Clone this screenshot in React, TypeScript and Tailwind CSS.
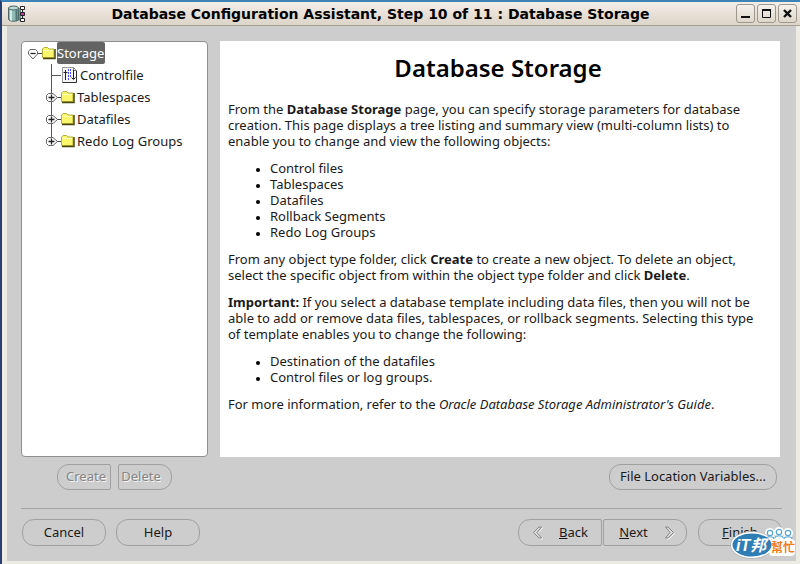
import { useState } from "react";
import type { ReactNode } from "react";
import clsx from "clsx";

type TreeItem = {
  id: string;
  label: string;
  kind: "root" | "file" | "folder";
  last?: boolean;
};

const treeItems: TreeItem[] = [
  { id: "storage", label: "Storage", kind: "root" },
  { id: "controlfile", label: "Controlfile", kind: "file" },
  { id: "tablespaces", label: "Tablespaces", kind: "folder" },
  { id: "datafiles", label: "Datafiles", kind: "folder" },
  { id: "redo", label: "Redo Log Groups", kind: "folder", last: true },
];

const objectTypes = [
  "Control files",
  "Tablespaces",
  "Datafiles",
  "Rollback Segments",
  "Redo Log Groups",
];

const templateChanges = [
  "Destination of the datafiles",
  "Control files or log groups.",
];

function Folder({ x }: { x: number }) {
  return (
    <g transform={`translate(${x} 5)`}>
      <path d="M.5 10.500V2L2 .5H5.500L7 2H12V10.500Z" fill="#faf76c" stroke="#b5ae3a" />
      <path d="M1 3.500H11" stroke="#ffffc0" />
      <path d="M1 11.500H13V2" fill="none" stroke="#4a4610" strokeWidth="1.500" />
    </g>
  );
}

function TreeGraphic({ item }: { item: TreeItem }) {
  if (item.kind === "root") {
    return (
      <svg width="30" height="22" className="shrink-0" aria-hidden="true">
        <path d="M10 11.500H15" stroke="#444" />
        <path
          d="M3 7.500H8.500L10.500 9.500V12L6 17L1.500 12V9.500Z"
          fill="#fff"
          stroke="#666"
        />
        <path d="M3.500 11.500H8.500" stroke="#222" strokeWidth="1.300" />
        <Folder x={15} />
      </svg>
    );
  }

  if (item.kind === "file") {
    return (
      <svg width="53" height="22" className="shrink-0" aria-hidden="true">
        <path d="M24.500 0V22M24.500 11.500H34" stroke="#555" fill="none" />
        <path d="M35.500 3.500H46.500L49.500 6.500V18.500H35.500Z" fill="#f4f4f4" stroke="#999" />
        <path d="M35.500 18.500H49.500V7" fill="none" stroke="#333" />
        <path d="M46.500 3.500V6.500H49.500" fill="none" stroke="#777" />
        <path d="M38.500 6V16M36.500 8.500H40.500M46.500 6V15" stroke="#222" fill="none" />
        <path d="M44.500 13.500L46.500 15.500L48.500 13.500" stroke="#222" fill="none" />
        <path d="M41.500 5V17M43.500 5V14" stroke="#4a4ae0" strokeDasharray="2 1" />
      </svg>
    );
  }

  return (
    <svg width="50" height="22" className="shrink-0" aria-hidden="true">
      <path d={item.last ? "M24.500 0V8" : "M24.500 0V22"} stroke="#555" />
      <path d="M29 11.500H34" stroke="#444" />
      <path
        d="M21.500 7.500H26L30.500 11.500L26 15.500H21.500L19.500 13.500V9.500Z"
        fill="#fff"
        stroke="#666"
      />
      <path d="M21.500 11.500H27.500M24.500 8.500V14.500" stroke="#222" strokeWidth="1.300" />
      <Folder x={34} />
    </svg>
  );
}

function DatabaseIcon() {
  return (
    <svg width="20" height="20" viewBox="0 0 20 20" aria-hidden="true">
      <path d="M4 4V15C4 18 14 18 14 15V4Z" fill="#6f9a96" />
      <path d="M1.500 4V15C1.500 18 11.500 18 11.500 15V4Z" fill="#8fbab5" stroke="#4b6664" />
      <path d="M4 6V16.500" stroke="#d5ebe8" strokeWidth="2" />
      <path d="M9.500 6V16.500" stroke="#4f7673" strokeWidth="2" />
      <ellipse cx="6.500" cy="4" rx="5" ry="2" fill="#b9d6d2" stroke="#4b6664" />
      <path d="M15.500 4V16" stroke="#222" />
      <path d="M13.500 2.500H17.500V5.500H13.500Z" fill="#fff" stroke="#222" />
      <path d="M13.500 8.500H17.500V11.500H13.500Z" fill="#c438a8" stroke="#222" />
      <path d="M13.500 14.500H17.500V17.500H13.500Z" fill="#fff" stroke="#222" />
    </svg>
  );
}

function WindowButton({ label, children }: { label: string; children: ReactNode }) {
  return (
    <button
      type="button"
      aria-label={label}
      className="flex h-[19px] w-[19px] items-center justify-center rounded-[3px] border border-[#9d978b] bg-linear-to-b from-[#f5f2ec] to-[#ded7cb]"
    >
      <svg width="11" height="11" viewBox="0 0 11 11" fill="none" stroke="#111" aria-hidden="true">
        {children}
      </svg>
    </button>
  );
}

type PushButtonProps = {
  children: ReactNode;
  className?: string;
  disabled?: boolean;
};

function PushButton({ children, className, disabled }: PushButtonProps) {
  return (
    <button
      type="button"
      disabled={disabled}
      className={clsx(
        "flex items-center justify-center border border-[#a0a0a0] pb-[2px] text-[13px] leading-4",
        disabled ? "text-[#858585] [text-shadow:1px_1px_0_#f4f4f4]" : "text-[#1a1a1a]",
        className
      )}
    >
      {children}
    </button>
  );
}

function Chevron({ next }: { next?: boolean }) {
  const d = next
    ? "M1.500 1H4L9.500 6.500L4 12H1.500L6 6.500Z"
    : "M9.500 1H7L1.500 6.500L7 12H9.500L5 6.500Z";
  return (
    <svg width="11" height="14" viewBox="0 0 11 14" className="mt-[2px]" aria-hidden="true">
      <path d={d} fill="none" stroke="#f2f2f2" transform="translate(1 1)" />
      <path d={d} fill="#dcdcdc" stroke="#858585" />
    </svg>
  );
}

function BulletList({ items }: { items: string[] }) {
  return (
    <ul className="my-[11px] pl-7">
      {items.map((item) => (
        <li key={item} className="flex items-center">
          <span className="mt-1 mr-[10px] h-1 w-1 rounded-full bg-black" />
          {item}
        </li>
      ))}
    </ul>
  );
}

function SiteBadge() {
  return (
    <svg
      width="68"
      height="34"
      viewBox="0 0 68 34"
      className="pointer-events-none absolute right-[2px] bottom-[4px]"
      role="img"
      aria-label="iT邦幫忙"
    >
      <g fill="#fff" stroke="#fff" strokeWidth="4">
        <circle cx="40" cy="7" r="3" />
        <circle cx="49" cy="6" r="3" />
        <circle cx="58" cy="7" r="3" />
        <path d="M36 12H62" />
      </g>
      <ellipse cx="22" cy="19" rx="21.500" ry="13.500" fill="#fff" stroke="#9a9a9a" strokeWidth=".6" />
      <rect x="39" y="13" width="26" height="17" rx="4" fill="#fff" />
      <g fill="#fff" stroke="#5aa6d0" strokeWidth="1.200">
        <path d="M36 13C36 10 44 10 44 13M45 12C45 9 53 9 53 12M54 13C54 10 62 10 62 13" />
        <circle cx="40" cy="7" r="2.700" />
        <circle cx="49" cy="6" r="2.700" />
        <circle cx="58" cy="7" r="2.700" />
      </g>
      <ellipse cx="22" cy="19" rx="19.500" ry="11.500" fill="#2f7db5" />
      <text
        x="6"
        y="25"
        fill="#fff"
        fontSize="16"
        fontWeight="700"
        fontStyle="italic"
        fontFamily="'Liberation Sans', 'Noto Sans CJK TC', sans-serif"
      >
        iT邦
      </text>
      <text
        x="41"
        y="26"
        fill="#f07c1c"
        fontSize="12"
        fontWeight="700"
        fontFamily="'Noto Sans CJK TC', sans-serif"
      >
        幫忙
      </text>
    </svg>
  );
}

export default function App() {
  const [selected, setSelected] = useState("storage");

  return (
    <div className="relative flex min-h-screen flex-col border-t-2 border-l-2 border-t-[#3d83b5] border-l-[#27406f] bg-[#ecebe4] font-['Noto_Sans',sans-serif] text-[13px] leading-4 text-[#1a1a1a]">
      {/* Title bar */}
      <header className="flex h-6 items-center border-b border-b-[#a69f93] bg-linear-to-b from-[#f3f0e9] via-[#e9e0d8] to-[#dcd5c9] pr-[3px] pl-[5px]">
        <DatabaseIcon />
        <div className="flex-1 pr-[2px] text-center font-['DejaVu_Sans',sans-serif] text-sm font-bold text-black">
          Database Configuration Assistant, Step 10 of 11 : Database Storage
        </div>
        <div className="flex gap-[2px]">
          <WindowButton label="Minimize">
            <path d="M1 9H10" strokeWidth="2" />
          </WindowButton>
          <WindowButton label="Maximize">
            <path d="M1.500 2H9.500V9.500H1.500Z" />
            <path d="M1 2H10" strokeWidth="2" />
          </WindowButton>
          <WindowButton label="Close">
            <path d="M2 2L9 9M9 2L2 9" strokeWidth="2.400" />
          </WindowButton>
        </div>
      </header>

      <main className="mr-1 mb-[3px] ml-[5px] flex flex-1 flex-col bg-[#cdcdcd] px-[14px] pt-[15px] pb-[15px]">
        <div className="flex flex-1 gap-3 pr-[2px]">
          {/* Storage tree */}
          <nav className="w-[187px] shrink-0 rounded-[4px] border border-[#8f8f8f] bg-white pl-[5px]">
            <ul>
              {treeItems.map((item) => (
                <li key={item.id} className="flex h-[22px] items-center">
                  <TreeGraphic item={item} />
                  <button
                    type="button"
                    onClick={() => setSelected(item.id)}
                    className={clsx(
                      "h-[22px] rounded-[2px] pr-px text-[13px]",
                      selected === item.id ? "bg-[#636363] text-white" : "text-[#1a1a1a]"
                    )}
                  >
                    {item.label}
                  </button>
                </li>
              ))}
            </ul>
          </nav>

          {/* Help text */}
          <article className="flex-1 bg-white pt-[11px] pr-4 pl-2">
            <h1 className="mb-[17px] pl-1 text-center text-2xl font-semibold text-black">
              Database Storage
            </h1>
            <p>
              From the <b>Database Storage</b> page, you can specify storage parameters for
              database creation. This page displays a tree listing and summary view (multi-column
              lists) to enable you to change and view the following objects:
            </p>
            <BulletList items={objectTypes} />
            <p>
              From any object type folder, click <b>Create</b> to create a new object. To delete an
              object, select the specific object from within the object type folder and click{" "}
              <b>Delete</b>.
            </p>
            <p className="mt-[11px]">
              <b>Important:</b> If you select a database template including data files, then you
              will not be able to add or remove data files, tablespaces, or rollback segments.
              Selecting this type of template enables you to change the following:
            </p>
            <BulletList items={templateChanges} />
            <p>
              For more information, refer to the{" "}
              <i>Oracle Database Storage Administrator's Guide</i>.
            </p>
          </article>
        </div>

        <div className="mt-[7px] flex justify-between pr-[5px] pl-9">
          <div className="flex gap-[7px]">
            <PushButton disabled className="h-[26px] w-[54px] rounded-l-xl rounded-r-[2px] pl-1">
              Create
            </PushButton>
            <PushButton disabled className="h-[26px] w-[54px] rounded-l-[2px] rounded-r-xl pr-2">
              Delete
            </PushButton>
          </div>
          <PushButton className="h-[26px] w-[168px] rounded-xl">
            File Location Variables...
          </PushButton>
        </div>

        <hr className="mt-[18px] border-[#a3a3a3]" />

        <footer className="mt-[10px] flex justify-between pl-px">
          <div className="flex gap-[10px]">
            <PushButton className="h-[27px] w-[84px] rounded-xl">Cancel</PushButton>
            <PushButton className="h-[27px] w-[84px] rounded-xl">Help</PushButton>
          </div>
          <div className="flex">
            <PushButton className="h-[27px] w-[84px] gap-4 rounded-l-xl rounded-r-[2px]">
              <Chevron />
              <span>
                <u>B</u>ack
              </span>
            </PushButton>
            <PushButton className="ml-px h-[27px] w-[84px] gap-4 rounded-l-[2px] rounded-r-xl pl-1">
              <span>
                <u>N</u>ext
              </span>
              <Chevron next />
            </PushButton>
            <PushButton className="ml-[11px] h-[27px] w-[84px] rounded-xl">
              <span>
                <u>F</u>inish
              </span>
            </PushButton>
          </div>
        </footer>
      </main>

      <SiteBadge />
    </div>
  );
}
